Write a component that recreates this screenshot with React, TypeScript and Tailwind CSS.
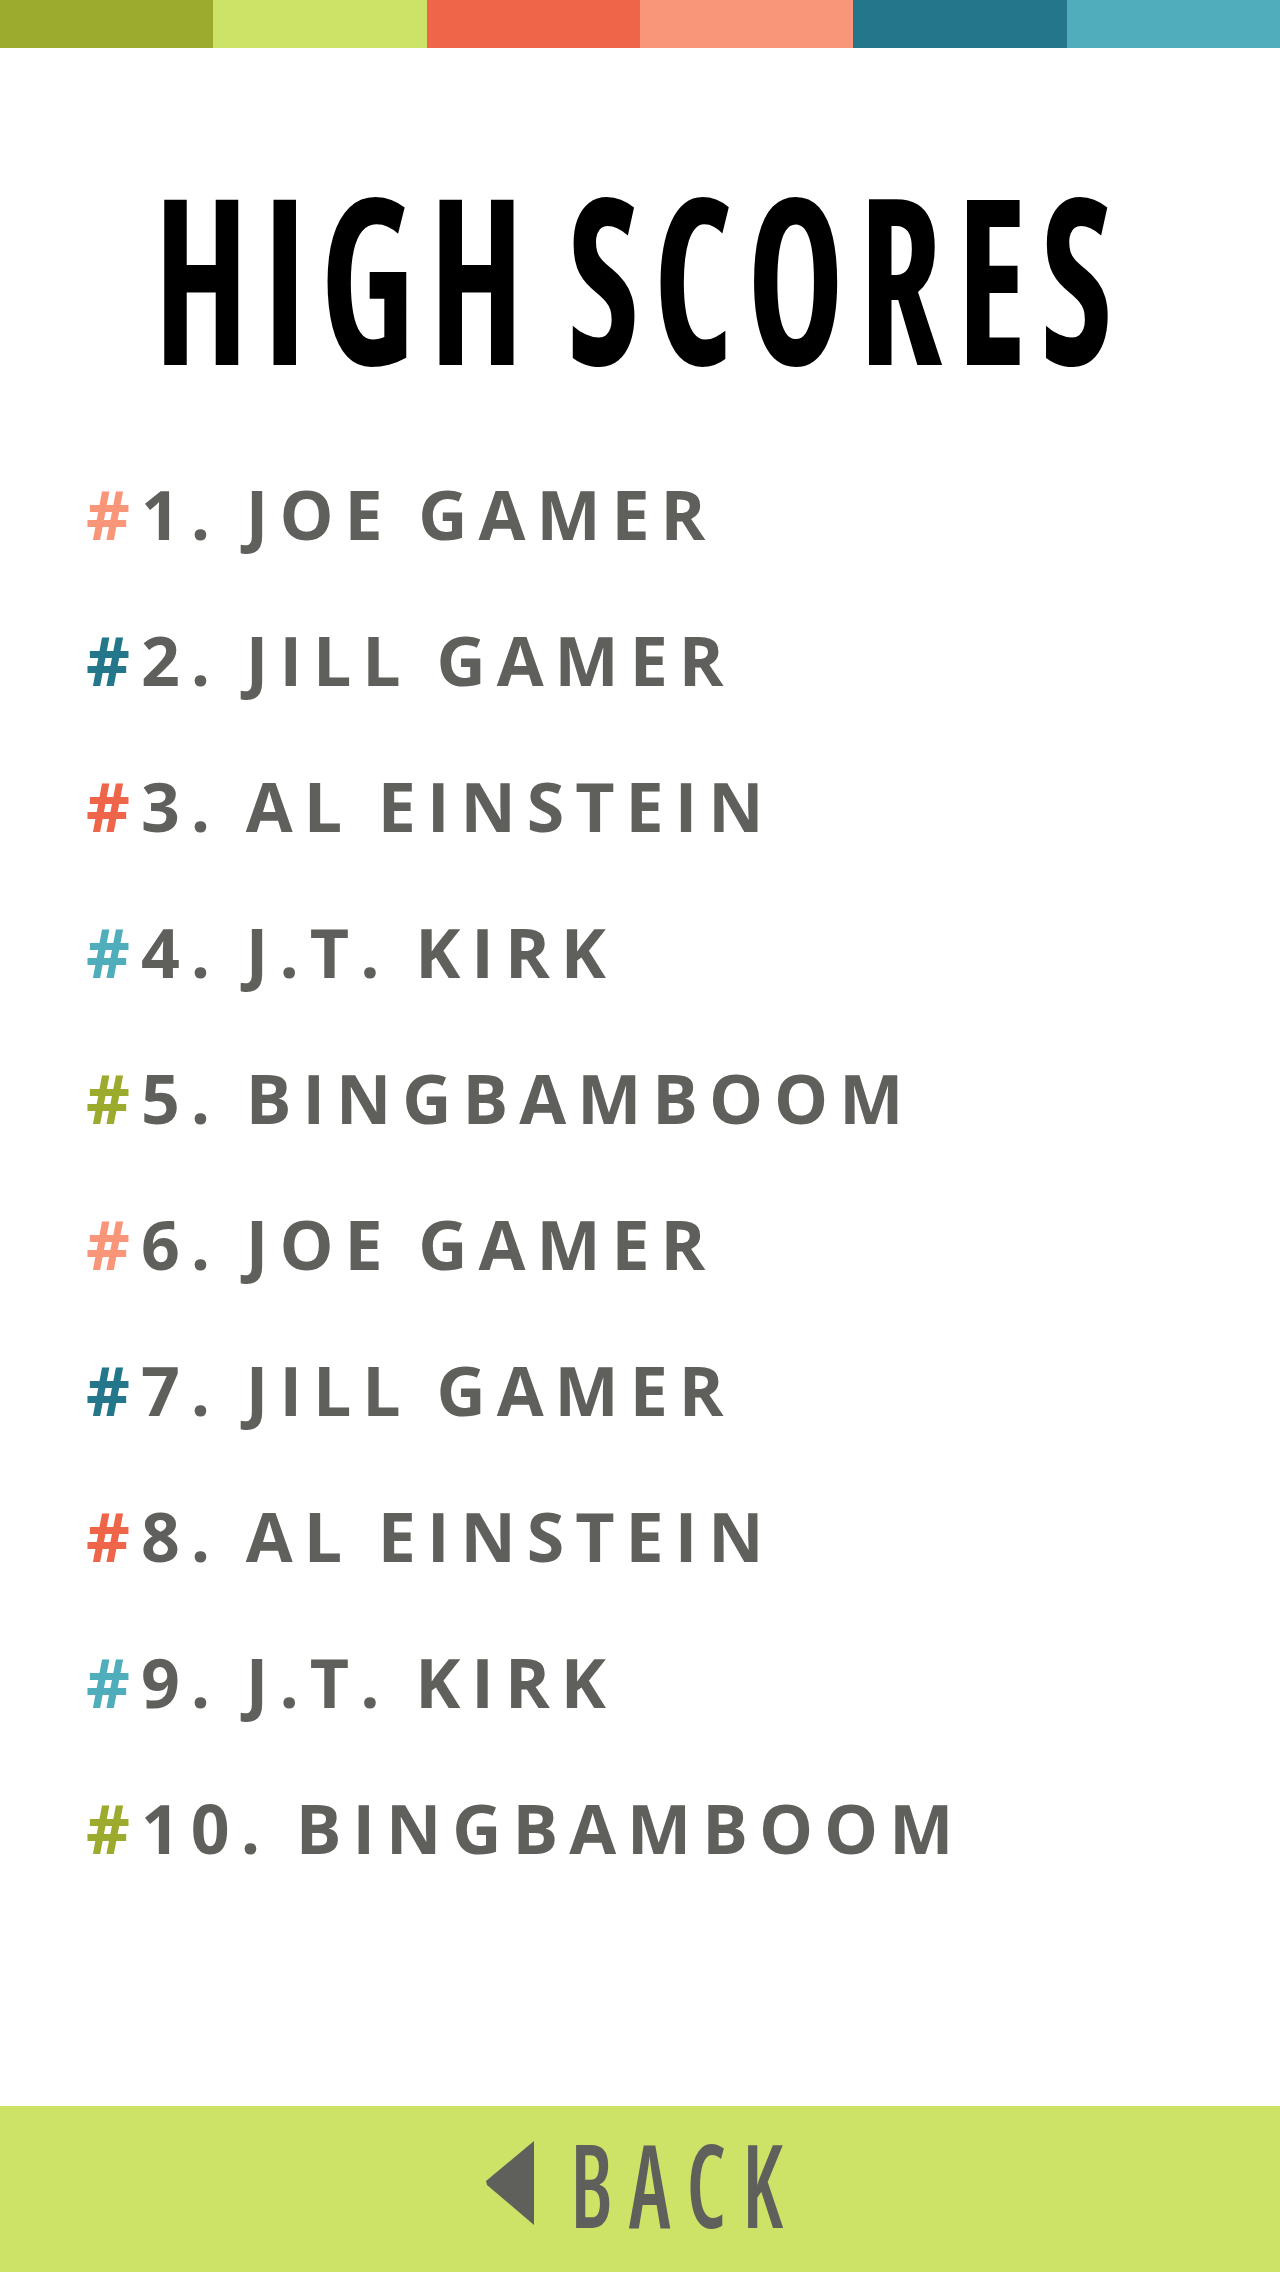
const stripe = ['bg-[#9caa2d]', 'bg-[#cde368]', 'bg-[#ee6549]', 'bg-[#f9967a]', 'bg-[#24768b]', 'bg-[#50adbc]'];

const scores = [
  { hash: 'text-[#f9967a]', name: '1. JOE GAMER' },
  { hash: 'text-[#24768b]', name: '2. JILL GAMER' },
  { hash: 'text-[#ee6549]', name: '3. AL EINSTEIN' },
  { hash: 'text-[#50adbc]', name: '4. J.T. KIRK' },
  { hash: 'text-[#9caa2d]', name: '5. BINGBAMBOOM' },
  { hash: 'text-[#f9967a]', name: '6. JOE GAMER' },
  { hash: 'text-[#24768b]', name: '7. JILL GAMER' },
  { hash: 'text-[#ee6549]', name: '8. AL EINSTEIN' },
  { hash: 'text-[#50adbc]', name: '9. J.T. KIRK' },
  { hash: 'text-[#9caa2d]', name: '10. BINGBAMBOOM' },
];

export default function App() {
  return (
    <div className="flex flex-col min-h-screen bg-white font-['Open_Sans',sans-serif]">
      {/* colour stripe */}
      <div className="flex h-[48px]">
        {stripe.map((c, i) => (
          <div key={i} className={`flex-1 ${c}`} />
        ))}
      </div>

      {/* title */}
      <div className="flex justify-center mt-[112px] h-[231px]">
        <h1 className="inline-block scale-x-[0.71] whitespace-nowrap text-[231px] leading-none font-bold font-stretch-condensed tracking-[20px] [word-spacing:-20px] text-black">
          HIGH SCORES
        </h1>
      </div>

      {/* list */}
      <ol className="flex flex-col mt-[50px] pl-[86px]">
        {scores.map((s, i) => (
          <li key={i} className="flex items-center h-[146px]">
            <span className="whitespace-nowrap text-[68px] leading-none font-bold tracking-[11px] [word-spacing:-4px] text-[#5f605c]">
              <span className={s.hash}>#</span>
              {s.name}
            </span>
          </li>
        ))}
      </ol>

      {/* back button */}
      <button className="mt-auto flex items-center justify-center gap-[42px] h-[166px] w-full bg-[#cde368] pb-[12px]">
        <svg width="48" height="84" viewBox="0 0 48 84" className="shrink-0">
          <polygon points="48,0 48,84 1,44 0,40" fill="#5f605c" />
        </svg>
        <div className="flex justify-center w-[218px]">
          <span className="inline-block scale-x-[0.74] whitespace-nowrap text-[115px] leading-none font-semibold font-stretch-condensed tracking-[22px] text-[#5f605c]">
            BACK
          </span>
        </div>
      </button>
    </div>
  );
}
